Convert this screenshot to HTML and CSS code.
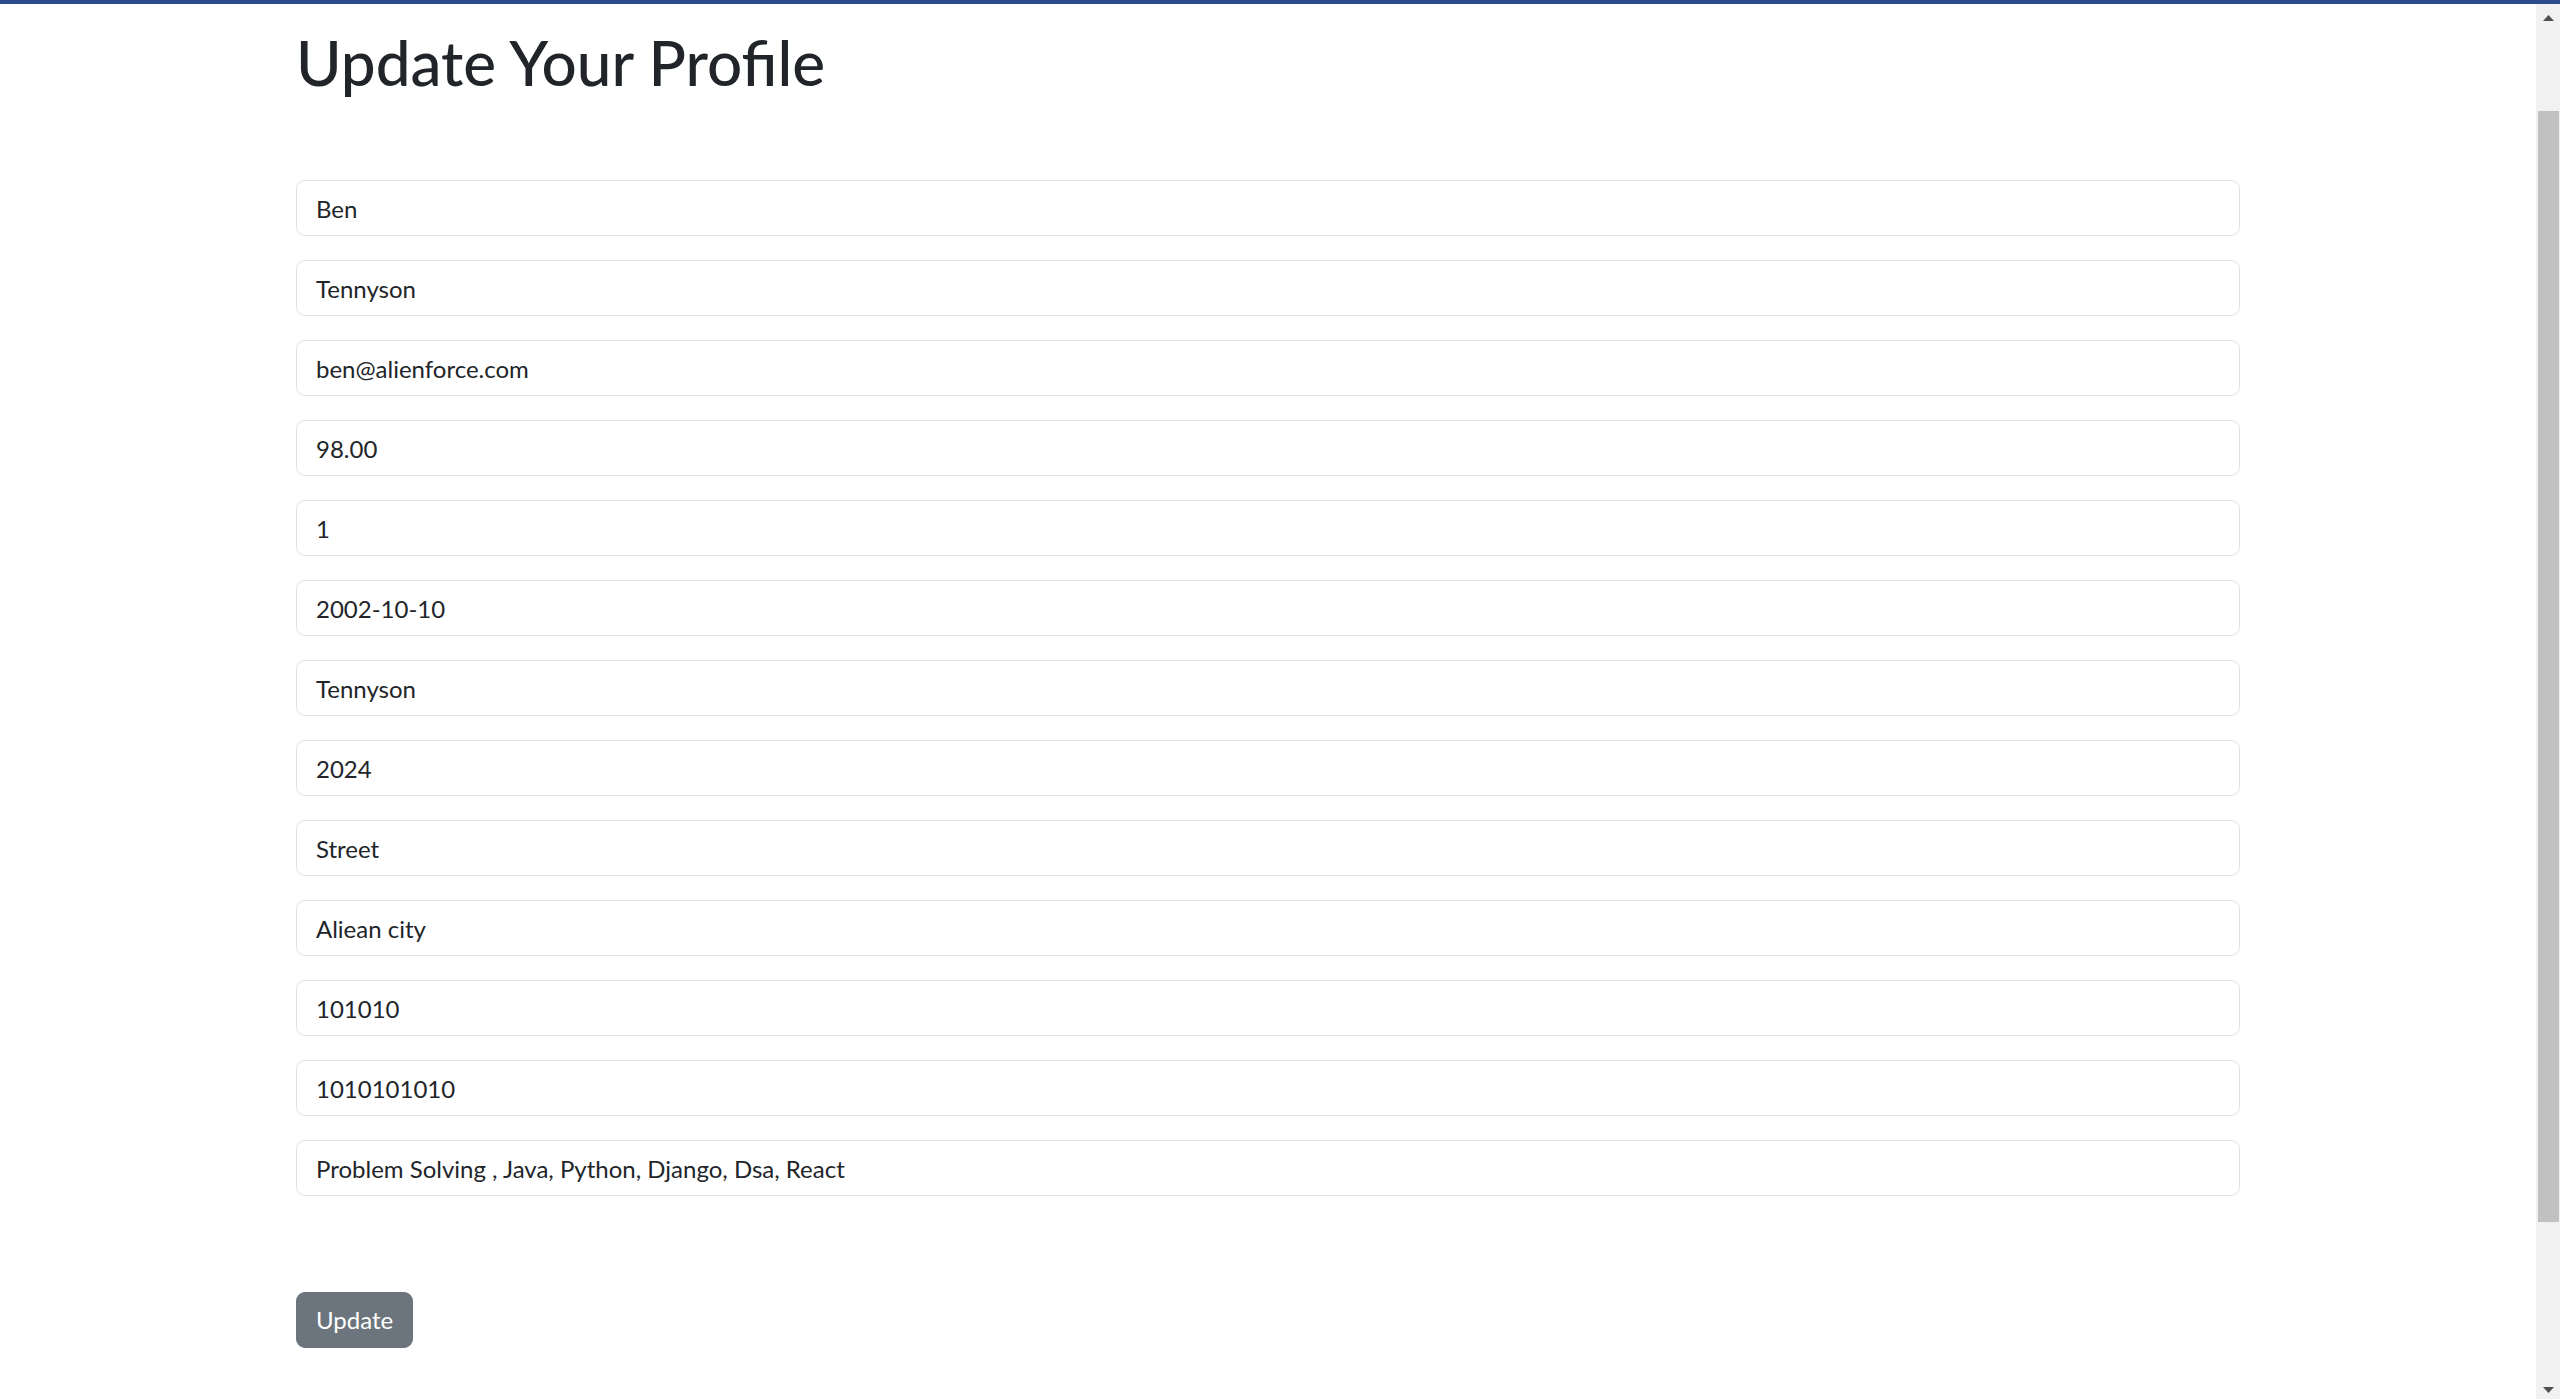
FILE: index.html
```html
<!DOCTYPE html>
<html lang="en">
<head>
<meta charset="utf-8">
<title>Update Your Profile</title>
<link rel="stylesheet" href="styles.css">
</head>
<body>
<div class="topbar"></div>
<div class="page">
  <main class="main">
    <div class="container">
      <h1 class="title">Update Your Profile</h1>
      <form class="form">
        <input class="field" type="text" value="Ben">
        <input class="field" type="text" value="Tennyson">
        <input class="field" type="text" value="ben@alienforce.com">
        <input class="field" type="text" value="98.00">
        <input class="field" type="text" value="1">
        <input class="field" type="text" value="2002-10-10">
        <input class="field" type="text" value="Tennyson">
        <input class="field" type="text" value="2024">
        <input class="field" type="text" value="Street">
        <input class="field" type="text" value="Aliean city">
        <input class="field" type="text" value="101010">
        <input class="field" type="text" value="1010101010">
        <input class="field" type="text" value="Problem Solving , Java, Python, Django, Dsa, React">
        <div class="actions">
          <button class="btn" type="button">Update</button>
        </div>
      </form>
    </div>
  </main>
  <div class="scrollbar">
    <div class="sb-up"><svg width="11" height="6" viewBox="0 0 11 6"><polygon points="5.5,0 11,6 0,6" fill="#505050"/></svg></div>
    <div class="sb-thumb"></div>
    <div class="sb-fill"></div>
    <div class="sb-down"><svg width="11" height="6" viewBox="0 0 11 6"><polygon points="0,0 11,0 5.5,6" fill="#505050"/></svg></div>
  </div>
</div>
</body>
</html>
```
FILE: styles.css
```css
* { box-sizing: border-box; }
html, body { margin: 0; padding: 0; height: 100%; overflow: hidden; }
body {
  background: #fff;
  color: #212529;
  font-family: "Segoe UI", Lato, "Noto Sans", sans-serif;
  display: flex;
  flex-direction: column;
}
.topbar { height: 4px; background: #2a4b8d; flex: none; }
.page { flex: 1; display: flex; min-height: 0; }
.main { flex: 1; min-width: 0; }
.container { width: 1944px; margin: 0 auto; }
.title {
  margin: 21px 0 0 0;
  font-size: 62px;
  font-weight: 500;
  line-height: 1.2;
  color: #212529;
}
.form { display: flex; flex-direction: column; margin-top: 81px; }
.field {
  display: block;
  width: 100%;
  height: 56px;
  margin: 0 0 24px 0;
  padding: 9px 19px;
  font-family: inherit;
  font-size: 24px;
  line-height: 36px;
  color: #212529;
  background: #fff;
  border: 1px solid #dee2e6;
  border-radius: 9px;
  outline: none;
}
.actions { padding-top: 72px; }
.btn {
  height: 56px;
  padding: 9px 19px;
  font-family: inherit;
  font-size: 24px;
  line-height: 36px;
  color: #fff;
  background: #6c757d;
  border: 1px solid #6c757d;
  border-radius: 9px;
}
.scrollbar {
  width: 24px;
  flex: none;
  background: #f1f1f1;
  display: flex;
  flex-direction: column;
}
.sb-up { height: 28px; display: flex; align-items: center; justify-content: center; padding-left: 1px; }
.sb-thumb { height: 1111px; margin: 79px 1px 0 2px; background: #c1c1c1; }
.sb-fill { flex: 1; }
.sb-down { height: 18px; display: flex; align-items: center; justify-content: center; padding-left: 1px; }
```
